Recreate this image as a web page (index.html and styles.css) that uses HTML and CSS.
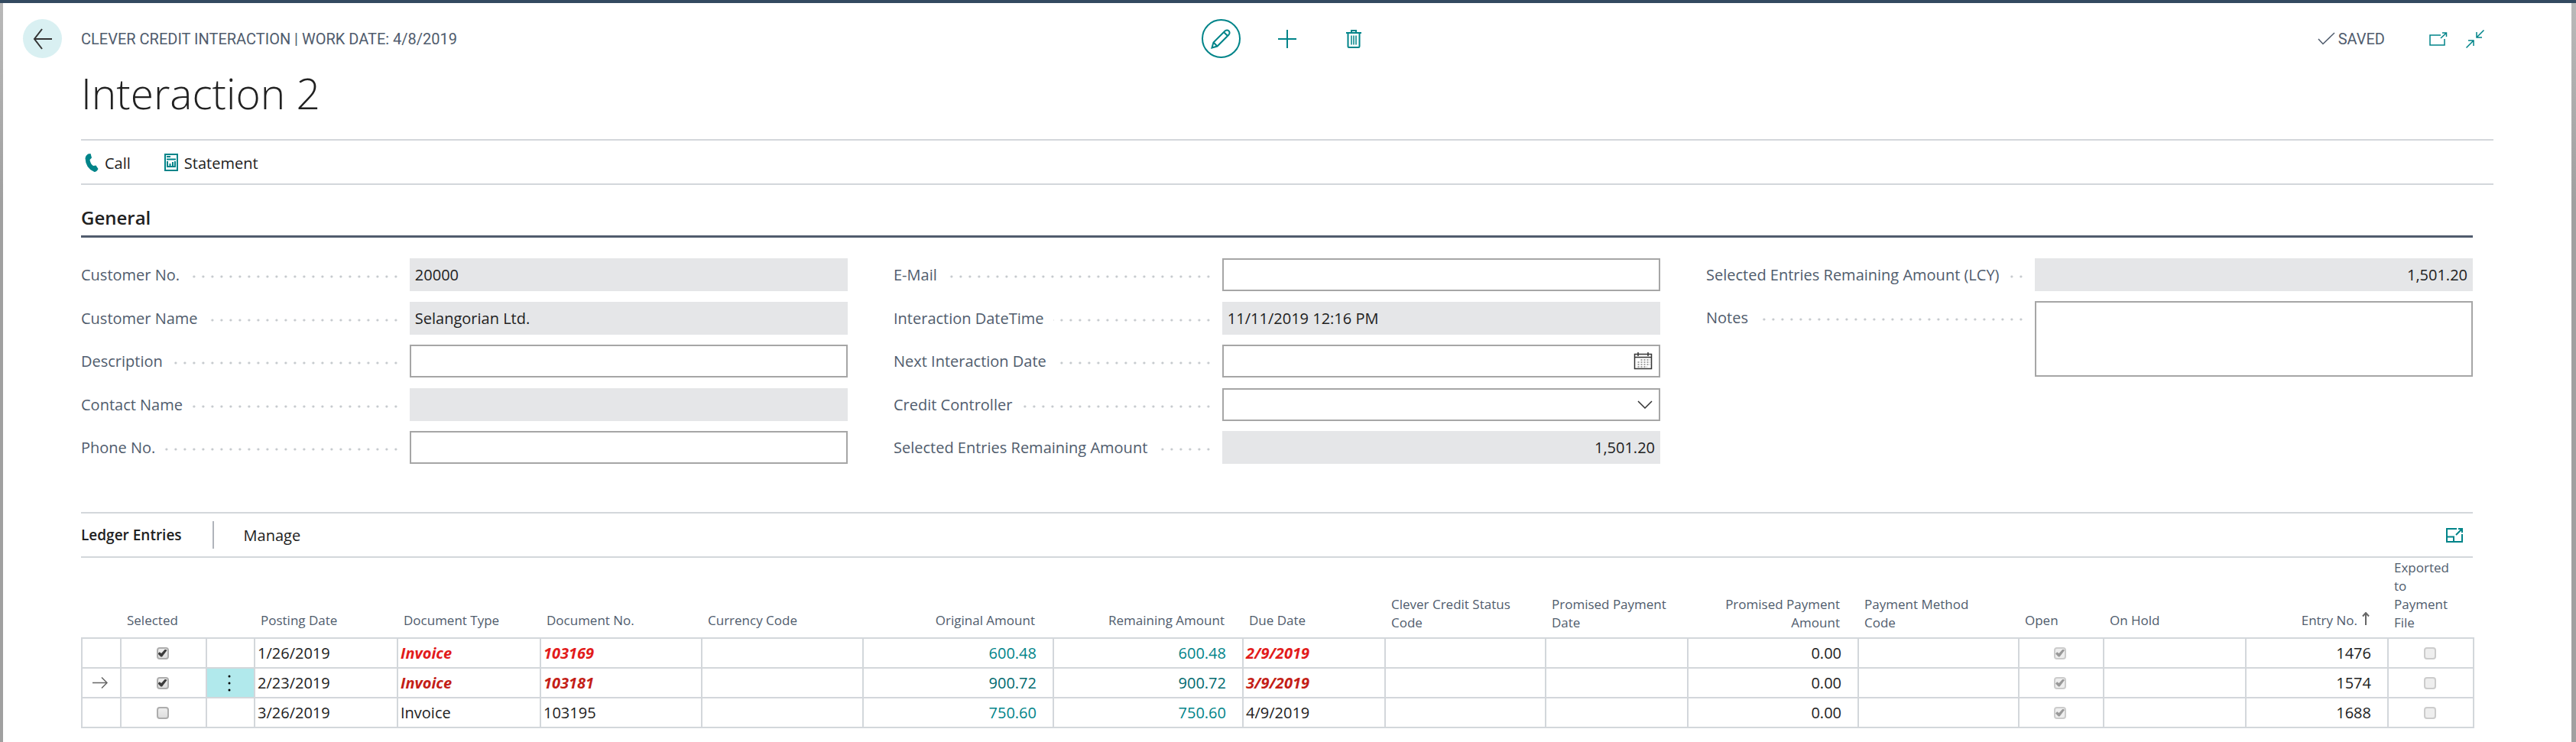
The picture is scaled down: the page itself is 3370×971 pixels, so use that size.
FILE: index.html
```html
<!DOCTYPE html>
<html lang="en">
<head>
<meta charset="utf-8">
<title>Interaction 2</title>
<link rel="stylesheet" href="styles.css">
</head>
<body>
<div class="frame">
<main class="page">
  <header class="topbar">
    <div class="crumb">
      <button class="back" aria-label="Back"><svg width="26" height="30" viewBox="0 0 26 30"><path d="M2 15H25M12 2L2 15L12 28" class="ink"/></svg></button>
      <span class="crumb-text">CLEVER CREDIT INTERACTION | WORK DATE: 4/8/2019</span>
    </div>
    <div class="actions">
      <button class="round ring" aria-label="Edit"><svg width="26" height="26" viewBox="0 0 26 26"><path d="M1.5 24.5L3.5 17.5L18.500 2.500Q21.500 .5 23.700 2.600Q25.500 5 23.500 7.500L8.500 22.500ZM3.500 17.500L8.500 22.500M17 4L22 9" class="teal"/></svg></button>
      <button class="round" aria-label="New"><svg width="24" height="24" viewBox="0 0 24 24"><path d="M12 0V24M0 12H24" class="teal"/></svg></button>
      <button class="round" aria-label="Delete"><svg width="20" height="24" viewBox="0 0 20 24"><path d="M0 4H20M7 4V1H13V4M2.500 4V21.500Q2.500 23 4 23H16Q17.500 23 17.500 21.500V4" class="teal"/><path d="M7 7.500V19.500M10 7.500V19.500M13 7.500V19.500" class="teal thin"/></svg></button>
    </div>
    <div class="status">
      <svg width="23" height="17" viewBox="0 0 23 17"><path d="M1 9L7 15.500L22 1" class="slate thin"/></svg>
      <span class="saved">SAVED</span>
      <button class="plain popout" aria-label="Open in new window"><svg width="24" height="18" viewBox="0 0 24 18"><path d="M15 4H1V17H20V9M15 8L22 1.500M17 1H22.500V6" class="teal thin"/></svg></button>
      <button class="plain" aria-label="Collapse"><svg width="24" height="24" viewBox="0 0 24 24"><path d="M23.500 .5L14.500 9.500M14 3V10H21M.5 23.500L9.500 14.500M3 14H10V21" class="teal thin"/></svg></button>
    </div>
  </header>

  <h1 class="title">Interaction 2</h1>

  <nav class="toolbar">
    <button class="plain tool"><svg width="18" height="24" viewBox="0 0 18 24"><path d="M4 .5L7.500 0L9 5.500L6.500 8Q7 13 11 16L14.500 15.500L17.500 20Q15.500 24 12.500 24Q1 19.500 .5 6Q1.500 2 4 .5Z" class="teal-fill"/></svg>Call</button>
    <button class="plain tool"><svg width="18" height="24" viewBox="0 0 18 24"><path d="M1 1H17V22H1Z" class="teal"/><path d="M3 4H8M3 7.500H15M4 10V17H14V10M7.500 17V13M11 17V11" class="teal"/></svg>Statement</button>
  </nav>

  <div class="body">
  <h2 class="section">General</h2>
  <div class="fields">
    <div class="col">
      <div class="field"><div class="lead"><label for="f1">Customer No.</label></div><input id="f1" class="box ro" value="20000" readonly></div>
      <div class="field"><div class="lead"><label for="f2">Customer Name</label></div><input id="f2" class="box ro" value="Selangorian Ltd." readonly></div>
      <div class="field"><div class="lead"><label for="f3">Description</label></div><input id="f3" class="box"></div>
      <div class="field"><div class="lead"><label for="f4">Contact Name</label></div><input id="f4" class="box ro" readonly></div>
      <div class="field"><div class="lead"><label for="f5">Phone No.</label></div><input id="f5" class="box"></div>
    </div>
    <div class="col">
      <div class="field"><div class="lead"><label for="f6">E-Mail</label></div><input id="f6" class="box"></div>
      <div class="field"><div class="lead"><label for="f7">Interaction DateTime</label></div><input id="f7" class="box ro" value="11/11/2019 12:16 PM" readonly></div>
      <div class="field"><div class="lead"><label for="f8">Next Interaction Date</label></div>
        <div class="combo"><input id="f8" class="box"><button class="plain pick" aria-label="Pick date"><svg width="25" height="23" viewBox="0 0 25 23"><path d="M1.500 2.500H23.500V21.500H1.500ZM1.500 6.500H23.500M6 0V5M19 0V5" class="ink thin"/><path d="M9.500 10H22M5.500 13H22M5.500 16H22M5.500 19H18" class="ink-dots"/></svg></button></div></div>
      <div class="field"><div class="lead"><label for="f9">Credit Controller</label></div>
        <div class="combo"><select id="f9" class="box"><option></option></select><span class="pick"><svg width="20" height="11" viewBox="0 0 20 11"><path d="M1 1L10 10L19 1" class="ink thin"/></svg></span></div></div>
      <div class="field"><div class="lead"><label for="f10">Selected Entries Remaining Amount</label></div><input id="f10" class="box ro num" value="1,501.20" readonly></div>
    </div>
    <div class="col">
      <div class="field"><div class="lead"><label for="f11">Selected Entries Remaining Amount (LCY)</label></div><input id="f11" class="box ro num" value="1,501.20" readonly></div>
      <div class="field"><div class="lead"><label for="f12">Notes</label></div><textarea id="f12" class="box area"></textarea></div>
    </div>
  </div>

  <div class="ledger-bar">
    <h3 class="ledger-title">Ledger Entries</h3>
    <button class="plain manage">Manage</button>
    <button class="plain expand" aria-label="Expand"><svg width="22" height="19" viewBox="0 0 22 19"><path d="M14 1H1V18H21V8M1 11.500H10V18M13 9L20 2M16 1H21V6" class="teal"/></svg></button>
  </div>

  <table class="grid">
    <colgroup><col class="w51"><col class="w112"><col class="w63"><col class="w187"><col class="w187"><col class="w211"><col class="w211"><col class="w249"><col class="w248"><col class="w186"><col class="w210"><col class="w186"><col class="w223"><col class="w210"><col class="w111"><col class="w186"><col class="w186"><col class="w112"></colgroup>
    <thead><tr>
      <th></th><th>Selected</th><th></th><th>Posting Date</th><th>Document Type</th><th>Document No.</th><th>Currency Code</th><th class="num">Original Amount</th><th class="num">Remaining Amount</th><th>Due Date</th><th class="multi">Clever Credit Status Code</th><th class="multi">Promised Payment Date</th><th class="num multi">Promised Payment Amount</th><th class="multi">Payment Method Code</th><th>Open</th><th>On Hold</th><th class="num">Entry No.<svg class="sort" width="10" height="17" viewBox="0 0 10 17"><path d="M5 17V1M1 5.500L5 1L9 5.500" class="gray"/></svg></th><th class="multi">Exported to Payment File</th>
    </tr></thead>
    <tbody>
      <tr><td></td><td class="mid"><input type="checkbox" class="tick" aria-label="Selected" checked></td><td></td><td>1/26/2019</td><td class="late">Invoice</td><td class="late">103169</td><td></td><td class="num"><a href="#" class="amt">600.48</a></td><td class="num"><a href="#" class="amt">600.48</a></td><td class="late">2/9/2019</td><td></td><td></td><td class="num">0.00</td><td></td><td class="mid"><input type="checkbox" class="tick" aria-label="Open" checked disabled></td><td></td><td class="num">1476</td><td class="mid"><input type="checkbox" class="tick" aria-label="Exported" disabled></td></tr>
      <tr class="current"><td class="mid"><svg width="20" height="15" viewBox="0 0 20 15"><path d="M0 7.500H19M12 .5L19 7.500L12 14.500" class="gray thin"/></svg></td><td class="mid"><input type="checkbox" class="tick" aria-label="Selected" checked></td><td class="mid more"><button class="plain" aria-label="Row menu"><svg width="6" height="22" viewBox="0 0 6 22"><circle cx="3" cy="2" r="1.500"/><circle cx="3" cy="11" r="1.500"/><circle cx="3" cy="20" r="1.500"/></svg></button></td><td>2/23/2019</td><td class="late">Invoice</td><td class="late">103181</td><td></td><td class="num"><a href="#" class="amt">900.72</a></td><td class="num"><a href="#" class="amt">900.72</a></td><td class="late">3/9/2019</td><td></td><td></td><td class="num">0.00</td><td></td><td class="mid"><input type="checkbox" class="tick" aria-label="Open" checked disabled></td><td></td><td class="num">1574</td><td class="mid"><input type="checkbox" class="tick" aria-label="Exported" disabled></td></tr>
      <tr><td></td><td class="mid"><input type="checkbox" class="tick" aria-label="Selected"></td><td></td><td>3/26/2019</td><td>Invoice</td><td>103195</td><td></td><td class="num"><a href="#" class="amt">750.60</a></td><td class="num"><a href="#" class="amt">750.60</a></td><td>4/9/2019</td><td></td><td></td><td class="num">0.00</td><td></td><td class="mid"><input type="checkbox" class="tick" aria-label="Open" checked disabled></td><td></td><td class="num">1688</td><td class="mid"><input type="checkbox" class="tick" aria-label="Exported" disabled></td></tr>
    </tbody>
  </table>
  </div>
</main>
</div>
</body>
</html>
```
FILE: styles.css
```css
* { box-sizing: border-box; }
body {
  margin: 0;
  font-family: "Open Sans", "Noto Sans", sans-serif;
  font-size: 20px;
  color: #212121;
  background: #fff;
}
h1, h2, h3 { margin: 0; }
button, input, select, textarea { font: inherit; color: inherit; }
svg { display: block; flex: none; }
path { fill: none; stroke-width: 2; }
.ink { stroke: #333; }
.ink-dots { stroke: #444; stroke-width: 1; stroke-dasharray: 2 2; }
.teal { stroke: #008489; }
path.teal-fill { fill: #008489; }
.slate { stroke: #505c6d; }
.gray { stroke: #666; }
.thin { stroke-width: 1.5; }

.frame {
  min-height: 100vh;
  padding: 0 6px 0 4px;
  border-top: 4px solid #334a60;
  background: linear-gradient(#b9b9b9, #a0a0a0 260px, #a0a0a0);
  display: flex;
}
.page {
  flex: 1;
  min-width: 0;
  background: #fff;
  padding: 21px 102px 16px;
}

.topbar {
  display: grid;
  grid-template-columns: 1fr auto 1fr;
  align-items: center;
  height: 51px;
}
.crumb { display: flex; align-items: center; gap: 25px; margin-left: -76px; }
.back {
  width: 51px; height: 51px; padding: 0;
  border: 0; border-radius: 50%;
  background: #d9f0f2;
  display: grid; place-items: center;
}
.crumb-text, .saved { font-family: Roboto, sans-serif; color: #505c6d; font-weight: 400; }
.actions { display: flex; gap: 36px; }
.round {
  width: 51px; height: 51px; padding: 0;
  border: 2px solid transparent; border-radius: 50%;
  background: none;
  display: grid; place-items: center;
}
.ring { border-color: #008489; }
.status { display: flex; align-items: center; justify-content: flex-end; gap: 4px; padding-right: 12px; }
.status .popout { margin: 0 20px 0 54px; }
.plain { border: 0; padding: 0; background: none; }

.title { font-size: 55px; font-weight: 300; line-height: 80px; margin-top: 6px; }

.toolbar {
  display: flex; gap: 44px;
  margin-top: 20px; padding: 2px 0 0 5px;
  height: 60px; align-items: center;
  border-top: 2px solid #d3d7db; border-bottom: 2px solid #d3d7db;
}
.tool { display: flex; align-items: center; gap: 8px; }

.body { margin-right: 27px; }
.section {
  font-size: 24px; font-weight: 600; line-height: 34px;
  padding: 26px 0 6px;
  border-bottom: 3px solid #505c6d;
}
.fields { display: grid; grid-template-columns: repeat(3, 1fr); gap: 60px; padding-top: 27px; }
.col { display: flex; flex-direction: column; justify-content: space-between; min-height: 269px; }
.col:last-child { justify-content: flex-start; gap: 13px; }
.field { display: grid; grid-template-columns: 3fr 4fr; align-items: start; }
.lead {
  height: 43px; margin-right: 12px;
  color: #505c6d; line-height: 44px;
  background: radial-gradient(circle, #c4c8cc 1px, transparent 2px) right 22px / 12px 4px repeat-x;
}
.lead label { display: inline-block; background: #fff; padding-right: 12px; }
.box {
  display: block; width: 100%; height: 43px;
  border: 2px solid #a6a6a6; border-radius: 0;
  background: #fff; padding: 0 5px; outline: 0;
}
.ro { background: #e5e6e8; border-color: #e5e6e8; }
.num { text-align: right; }
.area { height: 99px; resize: none; }
.combo { position: relative; }
.combo select { appearance: none; }
.pick { position: absolute; right: 10px; top: 0; height: 43px; display: grid; place-items: center; pointer-events: none; }

.ledger-bar {
  display: flex; align-items: center;
  margin-top: 63px; height: 60px;
  border-top: 2px solid #d3d7db; border-bottom: 2px solid #d3d7db;
}
.ledger-title { font-size: 19px; font-weight: 600; line-height: 36px; padding-right: 40px; border-right: 2px solid #b0b4bb; }
.manage { margin-left: 39px; }
.expand { margin-left: auto; margin-right: 13px; }

.grid { width: 100%; table-layout: fixed; border-collapse: collapse; }
.w51 { width: 51px; }
.w63 { width: 63px; }
.w111 { width: 111px; }
.w112 { width: 112px; }
.w186 { width: 186px; }
.w187 { width: 187px; }
.w210 { width: 210px; }
.w211 { width: 211px; }
.w223 { width: 223px; }
.w248 { width: 248px; }
.w249 { width: 249px; }
th {
  font-size: 17px; font-weight: 400; line-height: 24px; text-align: left;
  color: #505c6d; vertical-align: bottom;
  padding: 1px 24px 10px 8px;
  border-bottom: 2px solid #d3d7db;
}
th.multi { padding-bottom: 7px; }
th.num { text-align: right; }
.sort { display: inline-block; margin-left: 6px; }
td {
  height: 39px; padding: 0 3px; line-height: 28px;
  border: 2px solid #d3d7db;
}
td.num { padding-right: 21px; }
td.mid { text-align: center; padding: 0 3px 0 0; }
.mid > svg { margin: 0 auto; }
.late { color: #e21b1b; font-weight: 700; font-style: italic; }
.current .late { color: #c41e17; }
.amt { color: #008489; text-decoration: none; }
.current .amt { color: #006a6f; }
.more { background: #b1e9ec; }
.more button { display: grid; margin: 0 auto; }
.tick {
  appearance: none;
  display: grid; place-items: center;
  width: 16px; height: 16px; margin: 0 auto;
  border: 2px solid #adadad; border-radius: 4px;
  background: linear-gradient(#ededed, #dedede);
}
.tick:checked::after {
  content: "";
  width: 12px; height: 10px;
  background: #3c3c3c;
  clip-path: polygon(0 60%, 18% 38%, 38% 56%, 80% 0, 100% 16%, 46% 100%, 32% 100%);
}
.tick:disabled { border-color: #ccc; background: #eee; }
.tick:disabled::after { background: #999; }
```
